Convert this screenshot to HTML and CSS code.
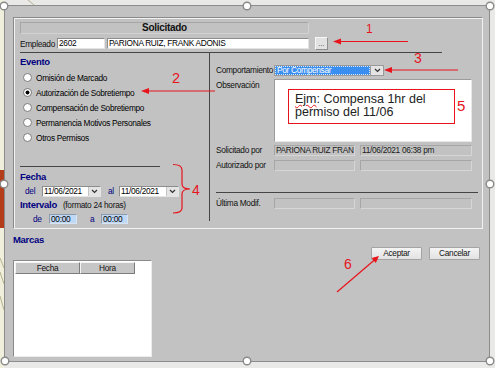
FILE: index.html
```html
<!DOCTYPE html>
<html lang="es">
<head>
  <meta charset="UTF-8">
  <meta name="viewport" content="width=device-width, initial-scale=1.0">
  <title>Solicitado</title>
  <link rel="stylesheet" href="styles.css">
</head>
<body>
  <div class="desk">
    <div class="shot">
      <div class="panel">
        <div class="title-box">Solicitado</div>

        <div class="emp-row">
          <span class="emp-label">Empleado</span>
          <span class="input code">2602</span>
          <span class="input name">PARIONA RUIZ, FRANK ADONIS</span>
          <span class="dots-btn">...</span>
        </div>

        <div class="divider"></div>

        <div class="columns">
          <div class="left-col">
            <div class="group-title evento">Evento</div>
            <div class="radios">
              <div class="radio-row"><span class="radio"></span>Omisión de Marcado</div>
              <div class="radio-row"><span class="radio on"></span>Autorización de Sobretiempo</div>
              <div class="radio-row"><span class="radio"></span>Compensación de Sobretiempo</div>
              <div class="radio-row"><span class="radio"></span>Permanencia Motivos Personales</div>
              <div class="radio-row"><span class="radio"></span>Otros Permisos</div>
            </div>

            <div class="short-line"></div>

            <div class="group-title fecha">Fecha</div>
            <div class="date-row">
              <span class="blue-lbl del">del</span>
              <span class="date-box">
                <span class="date-text">11/06/2021</span>
                <span class="drop"><svg width="7" height="5" viewBox="0 0 7 5"><path d="M1 1l2.5 2.5L6 1" fill="none" stroke="#333" stroke-width="1.2"/></svg></span>
              </span>
              <span class="blue-lbl al">al</span>
              <span class="date-box second">
                <span class="date-text">11/06/2021</span>
                <span class="drop"><svg width="7" height="5" viewBox="0 0 7 5"><path d="M1 1l2.5 2.5L6 1" fill="none" stroke="#333" stroke-width="1.2"/></svg></span>
              </span>
            </div>

            <div class="interval-row">
              <span class="group-title">Intervalo</span>
              <span class="hint">(formato 24 horas)</span>
            </div>
            <div class="time-row">
              <span class="blue-lbl de">de</span>
              <span class="time-box">00:00</span>
              <span class="blue-lbl a">a</span>
              <span class="time-box second">00:00</span>
            </div>
          </div>

          <div class="right-col">
            <div class="form-row comport">
              <span class="rlabel">Comportamiento</span>
              <span class="select">
                <span class="select-text">Por Compensar</span>
                <span class="drop"><svg width="7" height="5" viewBox="0 0 7 5"><path d="M1 1l2.5 2.5L6 1" fill="none" stroke="#333" stroke-width="1.2"/></svg></span>
              </span>
            </div>
            <div class="form-row obs">
              <span class="rlabel">Observación</span>
              <div class="textarea"></div>
            </div>
            <div class="form-row info first">
              <span class="rlabel">Solicitado por</span>
              <span class="flat f1">PARIONA RUIZ FRAN</span>
              <span class="flat f2">11/06/2021 06:38 pm</span>
            </div>
            <div class="form-row info second">
              <span class="rlabel">Autorizado por</span>
              <span class="flat f1"></span>
              <span class="flat f2"></span>
            </div>
            <div class="right-line"></div>
            <div class="form-row info last">
              <span class="rlabel">Última Modif.</span>
              <span class="flat f1"></span>
              <span class="flat f2"></span>
            </div>
          </div>
        </div>
      </div>

      <div class="bottom">
        <div class="marcas">
          <div class="group-title marcas-title">Marcas</div>
          <div class="grid">
            <div class="grid-head">
              <span class="col-fecha">Fecha</span>
              <span class="col-hora">Hora</span>
            </div>
          </div>
        </div>
        <div class="buttons">
          <button class="btn">Aceptar</button>
          <button class="btn">Cancelar</button>
        </div>
      </div>
    </div>
  </div>

  <!-- annotations drawn over the screenshot -->
  <div class="note"><span class="spell">Ejm</span>: Compensa 1hr del<br>permiso del 11/06</div>
  <div class="num n1">1</div>
  <div class="num n2">2</div>
  <div class="num n3">3</div>
  <div class="num n4">4</div>
  <div class="num n5">5</div>
  <div class="num n6">6</div>

  <svg class="marks" width="495" height="368" viewBox="0 0 495 368">
    <g stroke="#a9a37c" stroke-width="1" fill="none" opacity="0.8">
      <path d="M0 258 L4 268"/>
      <path d="M0 272 L4 284"/>
      <path d="M0 296 L4 310"/>
      <path d="M28 0 L34 5"/>
    </g>
    <g stroke="#e8141c" stroke-width="1.2" fill="none">
      <line x1="408" y1="41.5" x2="339" y2="41.5"/>
      <line x1="215" y1="91" x2="146" y2="91"/>
      <line x1="458" y1="70" x2="389" y2="70"/>
      <line x1="337" y1="292" x2="375" y2="259.5"/>
      <path d="M173 164.5 Q182 164.5 182 170 V184 Q182 189 190 189 Q182 189 182 194 V208 Q182 213 173 213"/>
    </g>
    <g fill="#e8141c">
      <polygon points="333,41.5 341,38.5 341,44.5"/>
      <polygon points="141,91 149,88 149,94"/>
      <polygon points="384,70 392,67 392,73"/>
      <polygon points="379,256 375.8,263 371.6,258"/>
    </g>
    <g fill="#fff" stroke="#8a8a8a" stroke-width="1.4">
      <circle cx="4" cy="6" r="3.8"/>
      <circle cx="247" cy="6" r="3.8"/>
      <circle cx="490" cy="6" r="3.8"/>
      <circle cx="4" cy="184" r="3.8"/>
      <circle cx="490" cy="184" r="3.8"/>
      <circle cx="5" cy="361" r="3.8"/>
      <circle cx="247" cy="361" r="3.8"/>
      <circle cx="490" cy="361" r="3.8"/>
    </g>
  </svg>
</body>
</html>
```

FILE: styles.css
```css
* {
  box-sizing: border-box;
}

body {
  margin: 0;
  width: 495px;
  height: 368px;
  overflow: hidden;
  position: relative;
  background: linear-gradient(to right, #efefdc 4px, #e9e9e8 4px);
  font-family: "Liberation Sans", Arial, sans-serif;
  font-size: 8.3px;
  letter-spacing: -0.3px;
  color: #111;
}

.desk {
  padding: 5px 0 0 4px;
}

/* left edge of the slide behind the picture */
.desk::before {
  content: "";
  position: absolute;
  left: 0;
  top: 170px;
  width: 4px;
  height: 58px;
  background: #b23d18;
}

.shot {
  width: 486px;
  height: 357px;
  border: 1px solid #8c8c8c;
  background: #c2c2c2;
  padding: 11px 6px 0 8px;
}

.panel {
  height: 212px;
  border: 1px solid;
  border-color: #8a8a8a #f2f2f2 #f2f2f2 #8a8a8a;
  box-shadow: inset 1px 1px 0 #f2f2f2;
  padding: 4px 0 0 6px;
}

.title-box {
  width: 289px;
  height: 12px;
  border: 1px solid;
  border-color: #a6a6a6 #d2d2d2 #d2d2d2 #a6a6a6;
  text-align: center;
  font-weight: bold;
  font-size: 10px;
  line-height: 10px;
  color: #111;
}

.emp-row {
  display: flex;
  align-items: center;
  height: 13px;
  margin-top: 3px;
}

.emp-label {
  width: 37px;
}

.input {
  height: 11px;
  background: #fff;
  border: 1px solid;
  border-color: #8d8d8d #e4e4e4 #e4e4e4 #8d8d8d;
  line-height: 9px;
  padding-left: 1px;
  color: #000;
  white-space: nowrap;
}

.code {
  width: 48px;
}

.name {
  width: 202px;
  margin-left: 2px;
}

.dots-btn {
  width: 13px;
  height: 13px;
  margin-left: 6px;
  background: #e2e2e2;
  border: 1px solid;
  border-color: #f6f6f6 #8e8e8e #8e8e8e #f6f6f6;
  font-size: 7px;
  line-height: 11px;
  letter-spacing: 0;
  text-align: center;
  color: #333;
}

.divider {
  width: 422px;
  height: 1px;
  margin-top: 2px;
  background: #454545;
}

.columns {
  display: flex;
  height: 168px;
}

.left-col {
  width: 189px;
}

.group-title {
  color: #000080;
  font-weight: bold;
  font-size: 9.5px;
  line-height: 12px;
}

.evento {
  margin-top: 3px;
}

.radios {
  margin-top: 2px;
}

.radio-row {
  display: flex;
  align-items: center;
  height: 15px;
  color: #000;
  white-space: nowrap;
}

.radio {
  width: 9px;
  height: 9px;
  margin: 0 4px 0 3px;
  border-radius: 50%;
  border: 1px solid #7c7c7c;
  background: #fff;
}

.radio.on {
  background: radial-gradient(circle, #000 0 1.7px, #fff 2.3px);
}

.short-line {
  width: 140px;
  height: 1px;
  margin-top: 21px;
  background: #454545;
}

.fecha {
  margin-top: 4px;
}

.date-row,
.interval-row,
.time-row {
  display: flex;
  align-items: center;
  height: 12px;
  margin-top: 2px;
  white-space: nowrap;
}

.blue-lbl {
  color: #000080;
}

.del {
  width: 17px;
  margin-left: 5px;
}

.al {
  width: 11px;
  margin-left: 7px;
}

.date-box {
  display: flex;
  width: 59px;
  height: 11px;
  background: #fff;
  border: 1px solid;
  border-color: #8d8d8d #e4e4e4 #e4e4e4 #8d8d8d;
}

.date-box.second {
  width: 60px;
}

.date-text {
  flex: 1;
  line-height: 9px;
  padding-left: 1px;
  color: #000;
  overflow: hidden;
}

.drop {
  width: 12px;
  flex: none;
  display: flex;
  align-items: center;
  justify-content: center;
  background: #e4e4e4;
  border-left: 1px solid #c4c4c4;
}

.hint {
  margin-left: 6px;
}

.de {
  width: 16px;
  margin-left: 13px;
}

.a {
  width: 11px;
  margin-left: 13px;
}

.time-box {
  width: 28px;
  height: 10px;
  background: #bed8f6;
  border: 1px solid;
  border-color: #8e9aaa #d6e4f4 #d6e4f4 #8e9aaa;
  line-height: 8px;
  padding-left: 1px;
  color: #000;
}

.time-box.second {
  width: 27px;
}

.right-col {
  flex: 1;
  border-left: 1px solid #454545;
  padding-left: 6px;
}

.form-row {
  display: flex;
  align-items: center;
  height: 11px;
}

.rlabel {
  width: 58px;
  flex: none;
  line-height: 11px;
  white-space: nowrap;
}

.comport {
  margin-top: 12px;
}

.select {
  display: flex;
  width: 110px;
  height: 11px;
  border: 1px solid #9a9a9a;
}

.select-text {
  flex: 1;
  background: #3a8eef;
  color: #fff;
  outline: 1px dotted #d8e8ff;
  outline-offset: -1px;
  line-height: 9px;
  padding-left: 2px;
}

.select .drop {
  width: 13px;
  border-left: 1px solid #9a9a9a;
}

.obs {
  align-items: flex-start;
  height: 63px;
  margin-top: 3px;
}

.obs .rlabel {
  line-height: 12px;
}

.textarea {
  width: 198px;
  height: 63px;
  background: #fff;
  border: 1px solid;
  border-color: #9c9c9c #e8e8e8 #e8e8e8 #9c9c9c;
}

.info.first {
  margin-top: 3px;
}

.info.second {
  margin-top: 4px;
}

.info.last {
  margin-top: 5px;
}

.flat {
  height: 11px;
  border: 1px solid;
  border-color: #a6a6a6 #d6d6d6 #d6d6d6 #a6a6a6;
  line-height: 9px;
  padding-left: 1px;
  color: #1a1a1a;
  white-space: nowrap;
  overflow: hidden;
}

.f1 {
  width: 81px;
}

.f2 {
  width: 112px;
  margin-left: 5px;
}

.right-line {
  width: 262px;
  height: 1px;
  margin-top: 21px;
  background: #454545;
}

.bottom {
  display: flex;
  justify-content: space-between;
}

.marcas-title {
  margin-top: 5px;
}

.grid {
  width: 139px;
  height: 97px;
  margin-top: 14px;
  background: #fff;
  border: 1px solid;
  border-color: #8a8a8a #ececec #ececec #8a8a8a;
  padding: 1px 0 0 1px;
}

.grid-head {
  display: flex;
}

.grid-head span {
  height: 12px;
  background: #c6c6c6;
  border: 1px solid;
  border-color: #f4f4f4 #7c7c7c #7c7c7c #f4f4f4;
  text-align: center;
  line-height: 10px;
  color: #111;
}

.col-fecha {
  width: 65px;
}

.col-hora {
  width: 55px;
}

.buttons {
  display: flex;
  gap: 7px;
  margin: 18px 3px 0 0;
}

.btn {
  width: 51px;
  height: 13px;
  padding: 0;
  font-family: inherit;
  font-size: 8.3px;
  letter-spacing: inherit;
  line-height: 11px;
  color: #111;
  background: linear-gradient(#f4f4f4, #e2e2e2);
  border: 1px solid #a4a4a4;
  border-radius: 1px;
}

/* annotations */
.note {
  position: absolute;
  left: 288px;
  top: 89px;
  width: 167px;
  height: 35px;
  border: 1px solid #e8141c;
  padding: 3px 0 0 6px;
  font-size: 12.5px;
  line-height: 13px;
  letter-spacing: 0;
  color: #222;
}

.spell {
  text-decoration: underline wavy #e8141c;
  text-decoration-thickness: 1px;
  text-underline-offset: 1px;
}

.num {
  position: absolute;
  font-size: 14px;
  line-height: 14px;
  letter-spacing: 0;
  color: #e8141c;
}

.n1 { left: 366px; top: 23px; font-size: 12px; line-height: 12px; }
.n2 { left: 172px; top: 71px; font-size: 14.5px; line-height: 14.5px; }
.n3 { left: 414px; top: 51px; }
.n4 { left: 192px; top: 183px; }
.n5 { left: 457px; top: 98px; font-size: 15px; line-height: 15px; }
.n6 { left: 344px; top: 257px; }

.marks {
  position: absolute;
  left: 0;
  top: 0;
  pointer-events: none;
}
```
